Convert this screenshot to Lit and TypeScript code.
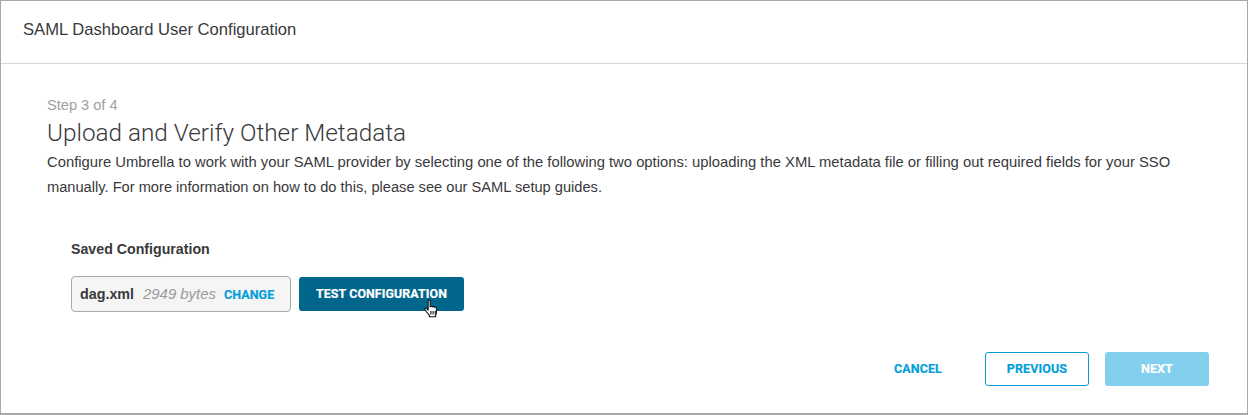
import { LitElement, html, css } from "lit";
import { customElement } from "lit/decorators.js";

@customElement("app-root")
export class AppRoot extends LitElement {
  static styles = css`
    :host { display: block; width: 1248px; height: 415px; }
    * { box-sizing: border-box; }
    .frame {
      width: 1248px; height: 415px; border: 1px solid #a8a8a8; border-width: 1px 1px 2px 1px;
      background: #fff; font-family: "Liberation Sans", Arial, sans-serif; color: #333;
      display: flex; flex-direction: column;
    }
    .head {
      height: 63px; flex: none; border-bottom: 1px solid #d8d8d8; padding: 0 0 4px 22px;
      display: flex; align-items: center; font-size: 16.6px; color: #39393b;
    }
    .body { flex: 1; padding: 33px 38px 0 46px; display: flex; flex-direction: column; }
    .step { font-size: 14.6px; line-height: 17px; color: #a0a0a0; }
    .title {
      font-family: Roboto, sans-serif; font-weight: 300; font-size: 24.3px; line-height: 26px;
      color: #39393b; margin-top: 6px;
    }
    .desc { font-size: 14.8px; line-height: 25px; color: #39393b; margin-top: 4px; width: 1130px; }
    .tail { font-size: 14.65px; }
    .section { padding-left: 24px; margin-top: 40px; }
    .label { font-size: 14.2px; font-weight: 700; line-height: 18px; color: #39393b; }
    .row { display: flex; gap: 8px; margin-top: 18px; align-items: center; }
    .file {
      width: 220px; height: 36px; background: #f5f5f5; border: 1px solid #a9a9a9; border-radius: 4px;
      display: flex; align-items: center; padding-left: 8px; font-size: 14.3px;
    }
    .name { font-weight: 700; color: #39393b; }
    .bytes { font-style: italic; font-size: 14.9px; color: #9a9a9a; margin-left: 9px; }
    .change {
      font-family: Roboto, sans-serif; font-weight: 700; font-size: 12.5px; color: #049fd9;
      margin-left: 8px; letter-spacing: 0.1px; -webkit-text-stroke: 0.2px currentColor;
    }
    .test {
      position: relative; width: 165px; height: 34px; background: #00668c; border-radius: 3px;
      display: flex; align-items: center; justify-content: center; color: #fff; padding-bottom: 1px;
      font-family: Roboto, sans-serif; font-weight: 700; font-size: 12.4px; letter-spacing: 0.1px;
      -webkit-text-stroke: 0.2px currentColor;
    }
    .cursor { position: absolute; left: 124px; top: 22px; width: 18px; height: 22px; }
    .actions { display: flex; align-items: center; justify-content: flex-end; margin-top: 40px; }
    .btn {
      height: 34px; border-radius: 3px; width: 104px; display: flex; align-items: center; justify-content: center;
      font-family: Roboto, sans-serif; font-weight: 700; font-size: 12.5px; letter-spacing: 0.1px; padding-bottom: 1px;
      -webkit-text-stroke: 0.2px currentColor;
    }
    .cancel { color: #049fd9; width: auto; margin-right: 43px; padding-bottom: 2px; }
    .prev { color: #049fd9; border: 1px solid #049fd9; background: #fff; }
    .next { color: #fff; background: #82cfee; margin-left: 16px; }
  `;

  render() {
    return html`
      <div class="frame">
        <div class="head">SAML Dashboard User Configuration</div>
        <div class="body">
          <div class="step">Step 3 of 4</div>
          <div class="title">Upload and Verify Other Metadata</div>
          <div class="desc">Configure Umbrella to work with your SAML provider by selecting one of the following two options: uploading the XML metadata file or filling out required fields for your SSO <span class="tail">manually. For more information on how to do this, please see our SAML setup guides.</span></div>
          <div class="section">
            <div class="label">Saved Configuration</div>
            <div class="row">
              <div class="file">
                <span class="name">dag.xml</span>
                <span class="bytes">2949 bytes</span>
                <span class="change">CHANGE</span>
              </div>
              <div class="test">
                TEST CONFIGURATION
                <svg class="cursor" viewBox="0 0 16 20">
                  <path d="M4.5 1.8c0-1.1 1.8-1.1 1.8 0v5.4c.3-.9 1.9-.9 2 .1.3-.8 1.8-.7 1.9.3.4-.7 1.8-.5 1.8.6v4.2c0 1-.4 1.6-.8 2.4v1.4H5.6v-1.4c-1.2-1.4-3.1-3.7-4-5-.8-1.1.6-2 1.5-1.1l1.4 1.4z" fill="#fff" stroke="#111" stroke-width="1" stroke-linejoin="round"/>
                  <path d="M7 11v3M9 11v3M11 11v3" stroke="#111" stroke-width="1" fill="none"/>
                </svg>
              </div>
            </div>
          </div>
          <div class="actions">
            <div class="btn cancel">CANCEL</div>
            <div class="btn prev">PREVIOUS</div>
            <div class="btn next">NEXT</div>
          </div>
        </div>
      </div>
    `;
  }
}
